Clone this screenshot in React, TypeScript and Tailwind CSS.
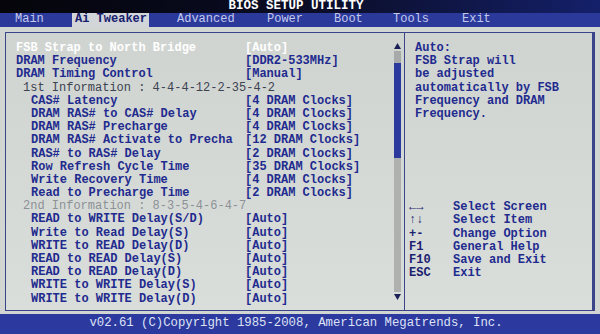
import React from "react";

type Row = { label: string; value?: string; indent: number; kind?: "sel" | "info1" | "info2" };

const rows: Row[] = [
  { label: "FSB Strap to North Bridge", value: "[Auto]", indent: 0, kind: "sel" },
  { label: "DRAM Frequency", value: "[DDR2-533MHz]", indent: 0 },
  { label: "DRAM Timing Control", value: "[Manual]", indent: 0 },
  { label: "1st Information : 4-4-4-12-2-35-4-2", indent: 1, kind: "info1" },
  { label: "CAS# Latency", value: "[4 DRAM Clocks]", indent: 2 },
  { label: "DRAM RAS# to CAS# Delay", value: "[4 DRAM Clocks]", indent: 2 },
  { label: "DRAM RAS# Precharge", value: "[4 DRAM Clocks]", indent: 2 },
  { label: "DRAM RAS# Activate to Precha", value: "[12 DRAM Clocks]", indent: 2 },
  { label: "RAS# to RAS# Delay", value: "[2 DRAM Clocks]", indent: 2 },
  { label: "Row Refresh Cycle Time", value: "[35 DRAM Clocks]", indent: 2 },
  { label: "Write Recovery Time", value: "[4 DRAM Clocks]", indent: 2 },
  { label: "Read to Precharge Time", value: "[2 DRAM Clocks]", indent: 2 },
  { label: "2nd Information : 8-3-5-4-6-4-7", indent: 1, kind: "info2" },
  { label: "READ to WRITE Delay(S/D)", value: "[Auto]", indent: 2 },
  { label: "Write to Read Delay(S)", value: "[Auto]", indent: 2 },
  { label: "WRITE to READ Delay(D)", value: "[Auto]", indent: 2 },
  { label: "READ to READ Delay(S)", value: "[Auto]", indent: 2 },
  { label: "READ to READ Delay(D)", value: "[Auto]", indent: 2 },
  { label: "WRITE to WRITE Delay(S)", value: "[Auto]", indent: 2 },
  { label: "WRITE to WRITE Delay(D)", value: "[Auto]", indent: 2 },
];

const tabs = [
  { name: "Main", w: "w-[60px]" },
  { name: "Ai Tweaker", w: "w-[102px]" },
  { name: "Advanced", w: "w-[90px]" },
  { name: "Power", w: "w-[67px]" },
  { name: "Boot", w: "w-[59px]" },
  { name: "Tools", w: "w-[69px]" },
  { name: "Exit", w: "w-[60px]" },
];

const keys = [
  ["←→", "Select Screen"],
  ["↑↓", "Select Item"],
  ["+-", "Change Option"],
  ["F1", "General Help"],
  ["F10", "Save and Exit"],
  ["ESC", "Exit"],
];

function OptionRow({ row }: { row: Row }) {
  const pad = row.indent === 0 ? "pl-[10px]" : row.indent === 1 ? "pl-[17px]" : "pl-[25px]";
  let color = "text-[#1f2b8e] font-bold";
  if (row.kind === "sel") color = "text-white font-bold";
  if (row.kind === "info1") color = "text-[#3c4250]";
  if (row.kind === "info2") color = "text-[#8c9196]";

  return (
    <div className={`flex h-[13.2px] items-center whitespace-pre ${color}`}>
      <div className={`w-[239px] shrink-0 ${pad}`}>{row.label}</div>
      {row.value && <div>{row.value}</div>}
    </div>
  );
}

function Scrollbar() {
  return (
    <div className="flex w-[8px] shrink-0 flex-col items-center pt-[10px] pb-[10px]">
      <svg width="7" height="6" viewBox="0 0 7 6">
        <polygon points="3.5,0 7,6 0,6" fill="#1b2156" />
      </svg>
      <div className="mt-[2px] flex w-[7px] flex-1 flex-col">
        <div className="h-[12px] bg-[#a7aaa8]" />
        <div className="h-[95px] bg-[#2b399e]" />
        <div className="flex-1 bg-[#aeb1ae]" />
      </div>
      <svg className="mt-[2px]" width="7" height="6" viewBox="0 0 7 6">
        <polygon points="0,0 7,0 3.5,6" fill="#1b2156" />
      </svg>
    </div>
  );
}

export default function App() {
  return (
    <div
      className="flex h-[334px] w-[600px] flex-col overflow-hidden bg-[#d2d6d3] text-[12px] leading-[13.2px]"
      style={{ fontFamily: '"Liberation Mono", "DejaVu Sans Mono", monospace' }}
    >
      {/* title */}
      <div className="flex h-[13px] items-center justify-center bg-gradient-to-r from-[#05050a] via-[#0a0c24] to-[#14206a] pr-[8px] text-[12.5px] font-bold text-white">
        BIOS SETUP UTILITY
      </div>

      {/* tabs */}
      <div className="flex h-[14px] items-center bg-[#2b399b] pl-[12px]">
        {tabs.map((t) => (
          <div key={t.name} className={`${t.w} flex h-full shrink-0 items-center`}>
            {t.name === "Ai Tweaker" ? (
              <span className="flex h-full items-center bg-[#d3d6d9] pr-[2px] pl-[3px] font-bold text-[#16206e]">
                {t.name}
              </span>
            ) : (
              <span className="pl-[3px] text-[#c3c9ee]">{t.name}</span>
            )}
          </div>
        ))}
      </div>

      {/* body */}
      <div className="flex flex-1 flex-col pt-[5px] pb-[3px] pl-[5px]">
        <div className="flex w-[590px] flex-1 border border-[#3a4589] bg-gradient-to-b from-[#d0d4d1] to-[#dadedb]">
          <div className="flex w-[399px] shrink-0 border-r border-[#3a4589]">
            <div className="flex-1 pt-[9px]">
              {rows.map((r) => (
                <OptionRow key={r.label} row={r} />
              ))}
            </div>
            <Scrollbar />
            <div className="w-[3px]" />
          </div>

          <div className="flex flex-1 flex-col border-r-2 border-[#3a4589] pt-[9px] font-bold text-[#1f2b8e] whitespace-pre">
            <div className="pl-[10px]">
              <div>Auto:</div>
              <div>FSB Strap will</div>
              <div>be adjusted</div>
              <div>automatically by FSB</div>
              <div>Frequency and DRAM</div>
              <div>Frequency.</div>
            </div>
            <div className="mt-[80px] pl-[4px]">
              {keys.map(([k, d]) => (
                <div key={k} className="flex">
                  <div className="w-[44px] shrink-0 text-[#1b2270]">{k}</div>
                  <div>{d}</div>
                </div>
              ))}
            </div>
          </div>
        </div>
      </div>

      {/* footer */}
      <div className="flex h-[20px] items-center justify-center bg-[#2c3a9f] pr-[8px] text-[12.3px] text-[#dfe2f6]">
        v02.61 (C)Copyright 1985-2008, American Megatrends, Inc.
      </div>
    </div>
  );
}
